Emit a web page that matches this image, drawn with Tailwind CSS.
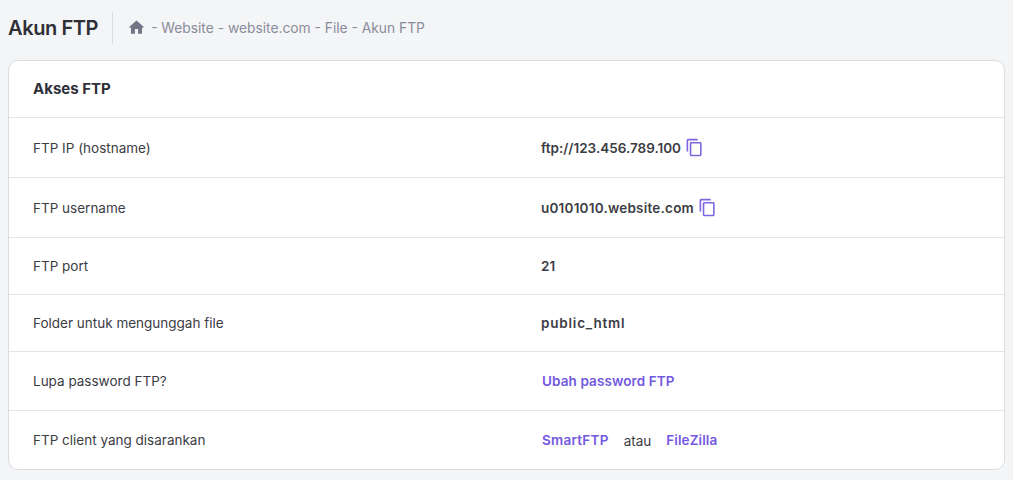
<!DOCTYPE html>
<html lang="en">
<head>
    <meta charset="UTF-8">
    <title>Akun FTP</title>
    <script src="https://cdn.jsdelivr.net/npm/@tailwindcss/browser@4"></script>
</head>
<body class="bg-[#f4f5f7] h-[480px] overflow-hidden font-['Inter',sans-serif] text-[#36344d]">
    <!-- Header -->
    <div class="h-[60px] pl-2 flex items-center">
        <h1 class="text-[20px] font-semibold text-[#2f2f38] pb-[4px] tracking-[-0.4px]">Akun FTP</h1>
        <div class="w-px h-8 bg-[#dadce0] ml-[14px] mb-[4px]"></div>
        <div class="flex items-center ml-[14px] pb-[4px] text-[13.8px] text-[#8a8c99]">
            <svg class="w-[19px] h-[19px] mr-[5px] mb-[2px]" viewBox="0 0 24 24" fill="#727586"><path d="M10 20v-6h4v6h5v-8h3L12 3 2 12h3v8z"/></svg>
            <span>- Website - website.com - File - Akun FTP</span>
        </div>
    </div>

    <!-- Card -->
    <div class="mx-2 w-[997px] h-[410px] bg-white border border-[#dadce0] rounded-[10px] text-[13.5px] text-[#3c3c44]">
        <div class="h-[57px] px-6 flex items-center border-b border-[#e4e5e8]">
            <h2 class="text-[15px] font-bold text-[#2f2f38]">Akses FTP</h2>
        </div>
        <div class="h-[60px] pt-[2px] px-6 flex items-center border-b border-[#e4e5e8]">
            <div class="w-[508px]">FTP IP (hostname)</div>
            <div class="flex items-center font-semibold">
                ftp://123.456.789.100
                <svg class="w-[19px] h-[19px] ml-[4px] mb-[2px]" viewBox="0 0 24 24" fill="#7f66e0"><path d="M16 1H4c-1.1 0-2 .9-2 2v14h2V3h12V1zm3 4H8c-1.1 0-2 .9-2 2v14c0 1.1.9 2 2 2h11c1.1 0 2-.9 2-2V7c0-1.1-.9-2-2-2zm0 16H8V7h11v14z"/></svg>
            </div>
        </div>
        <div class="h-[60px] pt-[2px] px-6 flex items-center border-b border-[#e4e5e8]">
            <div class="w-[508px]">FTP username</div>
            <div class="flex items-center font-semibold tracking-[0.22px]">
                u0101010.website.com
                <svg class="w-[19px] h-[19px] ml-[4px] mb-[2px]" viewBox="0 0 24 24" fill="#7f66e0"><path d="M16 1H4c-1.1 0-2 .9-2 2v14h2V3h12V1zm3 4H8c-1.1 0-2 .9-2 2v14c0 1.1.9 2 2 2h11c1.1 0 2-.9 2-2V7c0-1.1-.9-2-2-2zm0 16H8V7h11v14z"/></svg>
            </div>
        </div>
        <div class="h-[57px] px-6 flex items-center border-b border-[#e4e5e8]">
            <div class="w-[508px]">FTP port</div>
            <div class="font-semibold">21</div>
        </div>
        <div class="h-[57px] px-6 flex items-center border-b border-[#e4e5e8]">
            <div class="w-[508px]">Folder untuk mengunggah file</div>
            <div class="font-semibold tracking-[0.8px]">public_html</div>
        </div>
        <div class="h-[59px] px-6 flex items-center border-b border-[#e4e5e8]">
            <div class="w-[508px]">Lupa password FTP?</div>
            <a class="font-semibold text-[#7358e0] tracking-[0.1px] ml-px">Ubah password FTP</a>
        </div>
        <div class="h-[58px] px-6 flex items-center">
            <div class="w-[508px]">FTP client yang disarankan</div>
            <a class="font-semibold text-[#7358e0] tracking-[0.25px] ml-px">SmartFTP</a>
            <span class="mx-[15px] mt-[2px]">atau</span>
            <a class="font-semibold text-[#7358e0] tracking-[0.1px]">FileZilla</a>
        </div>
    </div>
</body>
</html>
